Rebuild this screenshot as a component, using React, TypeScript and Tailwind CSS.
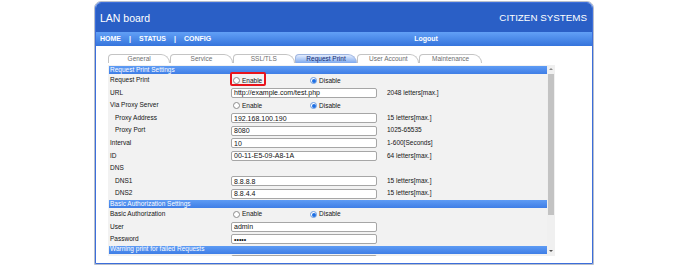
import React from "react";

type Row = {
  label: string;
  indent?: boolean;
  kind: "radio" | "input" | "blank";
  value?: string;
  hint?: string;
  mark?: boolean;
};

const tabs = ["General", "Service", "SSL/TLS", "Request Print", "User Account", "Maintenance"];

const sections: { title: string; rows: Row[] }[] = [
  {
    title: "Request Print Settings",
    rows: [
      { label: "Request Print", kind: "radio", mark: true },
      { label: "URL", kind: "input", value: "http://example.com/test.php", hint: "2048 letters[max.]" },
      { label: "Via Proxy Server", kind: "radio" },
      { label: "Proxy Address", indent: true, kind: "input", value: "192.168.100.190", hint: "15 letters[max.]" },
      { label: "Proxy Port", indent: true, kind: "input", value: "8080", hint: "1025-65535" },
      { label: "Interval", kind: "input", value: "10", hint: "1-600[Seconds]" },
      { label: "ID", kind: "input", value: "00-11-E5-09-A8-1A", hint: "64 letters[max.]" },
      { label: "DNS", kind: "blank" },
      { label: "DNS1", indent: true, kind: "input", value: "8.8.8.8", hint: "15 letters[max.]" },
      { label: "DNS2", indent: true, kind: "input", value: "8.8.4.4", hint: "15 letters[max.]" },
    ],
  },
  {
    title: "Basic Authorization Settings",
    rows: [
      { label: "Basic Authorization", kind: "radio" },
      { label: "User", kind: "input", value: "admin" },
      { label: "Password", kind: "input", value: "•••••" },
    ],
  },
  {
    title: "Warning print for failed Requests",
    rows: [{ label: "", kind: "input", value: "" }],
  },
];

function Radio({ on }: { on?: boolean }) {
  return on ? (
    <span className="flex h-[7px] w-[7px] items-center justify-center rounded-full border border-[#6a9be0] bg-white">
      <span className="h-[4px] w-[4px] rounded-full bg-[#1e6fe3]" />
    </span>
  ) : (
    <span className="h-[7px] w-[7px] rounded-full border border-[#8c8c8c] bg-white" />
  );
}

function FieldRow({ r }: { r: Row }) {
  return (
    <div className="grid h-[12.6px] grid-cols-[122px_146px_1fr] items-center text-[6.5px] leading-none text-[#141414]">
      <span className={r.indent ? "pl-[6px]" : "pl-[1px]"}>{r.label}</span>
      {r.kind === "input" && (
        <div className="flex h-[10px] items-center rounded-[2px] border border-[#a6a6a6] bg-white pl-[2px] text-[7px] text-[#111]">
          {r.value}
        </div>
      )}
      {r.kind === "radio" && (
        <div className="col-span-2 flex items-center pt-[1px]">
          <div className="relative flex w-[79px] items-center gap-[2px] pl-[2px]">
            <Radio />
            <span>Enable</span>
            {r.mark && (
              <span className="absolute left-[-1px] top-[-5px] h-[14px] w-[36px] rounded-[2px] border-2 border-[#e8141c]" />
            )}
          </div>
          <div className="flex items-center gap-[2px]">
            <Radio on />
            <span>Disable</span>
          </div>
        </div>
      )}
      {r.kind === "blank" && <span />}
      {r.kind === "input" && <span className="pl-[10px]">{r.hint}</span>}
    </div>
  );
}

export default function App() {
  return (
    <div className="h-[266px] w-[688px] overflow-hidden bg-white pt-[1px] font-['Liberation_Sans',Arial,sans-serif]">
      <div className="ml-[94px] h-[264px] w-[500px] rounded-t-[7px] border border-[#b8bfcc]">
        <div className="flex h-full flex-col overflow-hidden rounded-t-[6px] border border-[#3c6edb] bg-white">
          {/* title bar */}
          <div className="flex h-[29px] items-center justify-between bg-[#2a5fc6] px-[4px] pt-[2px] text-white">
            <span className="text-[10.5px]">LAN board</span>
            <span className="pr-[1px] text-[9.8px]">CITIZEN SYSTEMS</span>
          </div>
          {/* nav */}
          <div className="flex h-[14px] items-center bg-gradient-to-b from-[#62a0f6] to-[#3574dc] pl-[4px] text-[7px] font-bold text-white">
            <span>HOME</span>
            <span className="px-[8px]">|</span>
            <span>STATUS</span>
            <span className="px-[8px]">|</span>
            <span>CONFIG</span>
            <span className="ml-[203px]">Logout</span>
          </div>
          {/* body */}
          <div className="pl-[12px] pt-[8px]">
            <div className="flex h-[9px]">
              {tabs.map((t) => (
                <div
                  key={t}
                  className={
                    t === "Request Print"
                      ? "flex w-[62.3px] items-center justify-center rounded-tl-[4px] rounded-tr-[9px] border border-b-0 border-[#9fb5e0] bg-gradient-to-b from-[#e4edfd] to-[#7ea9ee] text-[6.5px] leading-none text-[#132a70]"
                      : "flex w-[62.3px] items-center justify-center rounded-tl-[4px] rounded-tr-[9px] border border-b-0 border-[#c4c4c4] bg-white text-[6.5px] leading-none text-[#6e6e6e]"
                  }
                >
                  {t}
                </div>
              ))}
            </div>
            <div className="mt-[2px] flex h-[191px] w-[447px] overflow-hidden bg-[#f2f2f2]">
              <div className="w-[439px] pl-[1px] pt-[1px]">
                {sections.map((s) => (
                  <div key={s.title}>
                    <div className="flex h-[8px] items-center bg-gradient-to-b from-[#5e9bf4] to-[#3f7ee6] pl-[1px] text-[6.5px] leading-none text-white">
                      {s.title}
                    </div>
                    {s.rows.map((r, i) => (
                      <FieldRow key={s.title + i} r={r} />
                    ))}
                  </div>
                ))}
              </div>
              {/* scrollbar */}
              <div className="flex w-[8px] flex-col items-center bg-[#f0f0f0]">
                <span className="mt-[3px] h-0 w-0 border-x-[2px] border-b-[2px] border-x-transparent border-b-[#8a8a8a]" />
                <span className="mt-[4px] h-[141px] w-[6px] bg-[#c3c3c3]" />
                <span className="mt-auto mb-[4px] h-0 w-0 border-x-[2px] border-t-[2px] border-x-transparent border-t-[#505050]" />
              </div>
            </div>
          </div>
        </div>
      </div>
    </div>
  );
}
